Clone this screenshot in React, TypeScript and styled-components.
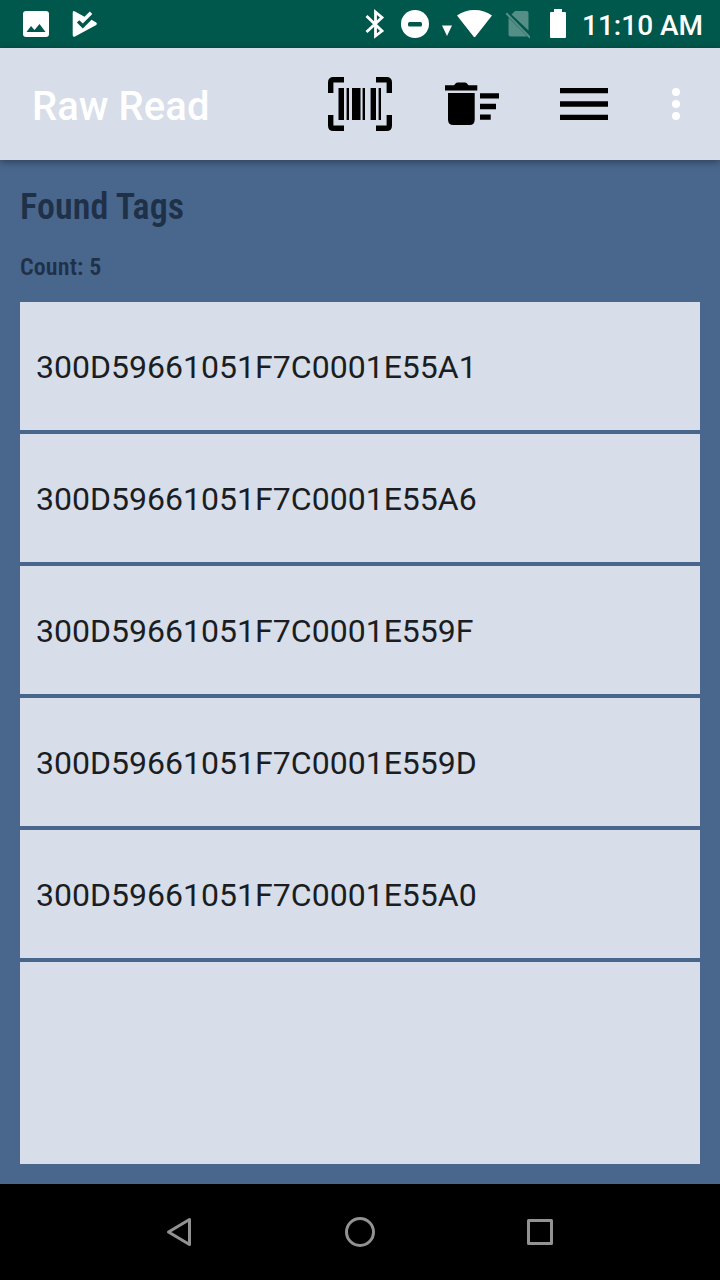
import React from 'react';
import styled, { createGlobalStyle } from 'styled-components';

const GlobalStyle = createGlobalStyle`
  *, *::before, *::after { box-sizing: border-box; }
  body { margin: 0; background: #49678d; font-family: Roboto, "Liberation Sans", sans-serif; }
  svg { display: block; flex: none; }
`;

const Screen = styled.div`
  width: 720px;
  height: 1280px;
  display: flex;
  flex-direction: column;
  background: #49678d;
  overflow: hidden;
`;

const StatusBar = styled.header`
  height: 48px;
  flex: none;
  display: flex;
  justify-content: space-between;
  padding: 0 18px 0 22px;
  background: #00574b;
  color: #fff;
`;

const StatusGroup = styled.div<{ $gap?: number }>`
  display: flex;
  align-items: center;
  gap: ${p => p.$gap ?? 0}px;
`;

const Clock = styled.time`
  width: 120px;
  margin-left: 16px;
  padding-top: 4px;
  font-size: 28px;
  font-weight: 500;
  line-height: 44px;
  white-space: nowrap;
`;

const AppBar = styled.div`
  height: 112px;
  flex: none;
  display: flex;
  align-items: center;
  padding: 0 8px 0 32px;
  background: #d7dde9;
  box-shadow: 0 2px 8px rgba(0, 0, 0, 0.4);
  z-index: 1;
`;

const Title = styled.h1`
  flex: 1;
  margin: 0;
  padding-top: 6px;
  color: #fff;
  font-size: 40px;
  font-weight: 500;
  letter-spacing: 0.06px;
  line-height: 48px;
  white-space: nowrap;
`;

const Action = styled.button<{ $width: number }>`
  width: ${p => p.$width}px;
  height: 112px;
  flex: none;
  display: flex;
  align-items: center;
  justify-content: center;
  padding: 0;
  border: 0;
  background: transparent;
`;

const Content = styled.main`
  flex: 1;
  min-height: 0;
  display: flex;
  flex-direction: column;
  padding: 24px 20px 20px;
`;

const Heading = styled.h2`
  height: 46px;
  flex: none;
  margin: 0;
  color: #1f3148;
  font-family: "Roboto Condensed", Roboto, sans-serif;
  font-stretch: 75%;
  font-size: 36px;
  font-weight: 600;
  letter-spacing: 0.1px;
  line-height: 46px;
`;

const Count = styled.p`
  height: 72px;
  flex: none;
  margin: 0;
  padding-top: 20px;
  color: #1f3148;
  font-family: "Roboto Condensed", Roboto, sans-serif;
  font-stretch: 75%;
  font-size: 24px;
  font-weight: 600;
  letter-spacing: 0.12px;
  line-height: 34px;
`;

const TagList = styled.ul`
  flex: 1;
  margin: 0;
  padding: 0;
  list-style: none;
  background: #d7dde9;
`;

const TagRow = styled.li`
  height: 132px;
  display: flex;
  align-items: center;
  padding: 2px 16px 0;
  border-bottom: 4px solid #49678d;
  color: #1a1d22;
  font-size: 32px;
  letter-spacing: 0.02px;
  line-height: 40px;
`;

const NavBar = styled.nav`
  height: 96px;
  flex: none;
  display: flex;
  justify-content: center;
  background: #000;
`;

const tags = [
  '300D59661051F7C0001E55A1',
  '300D59661051F7C0001E55A6',
  '300D59661051F7C0001E559F',
  '300D59661051F7C0001E559D',
  '300D59661051F7C0001E55A0',
];

const PictureIcon = () => (
  <svg width="28" height="48" fill="#fff">
    <path fillRule="evenodd" d="M4 11h20a3 3 0 0 1 3 3v20a3 3 0 0 1-3 3H4a3 3 0 0 1-3-3V14a3 3 0 0 1 3-3zM4.500 32h19l-6-8-5 6-3.500-4z" />
  </svg>
);

const PlayCheckIcon = () => (
  <svg width="28" height="48" fill="#fff">
    <path d="M2.700 13Q2.700 10.200 5 11.500L14.500 16.800 19.800 11.600 22.300 14 12.800 23.600 9.300 20.200 6.900 22.600 12.800 28.400 21.500 19.700 25.800 22.200Q28 23.700 25.800 25.200L5 36.500Q2.700 37.600 2.700 35z" />
  </svg>
);

const BluetoothIcon = () => (
  <svg width="20" height="48" fill="none" stroke="#fff" strokeWidth="2.800">
    <path d="M1.500 16 17 31 10.500 36V12L17 17.500 1.500 32" />
  </svg>
);

const DisturbIcon = () => (
  <svg width="28" height="48">
    <circle cx="14" cy="24" r="14" fill="#fff" />
    <rect x="7" y="22" width="14" height="4.500" rx="1.500" fill="#00574b" />
  </svg>
);

const WifiIcon = () => (
  <svg width="50" height="48" fill="#fff">
    <path d="M0 25.500h10L5 36zM15 15.500C24 8 41 8 50 15.500L33.500 36.500Q32.500 38 31.500 36.500z" />
  </svg>
);

const NoSimIcon = () => (
  <svg width="28" height="48">
    <g fill="#fff" opacity=".33">
      <path d="M13 11H24.500Q26.500 11 26.500 13V30.500L9.500 14.500zM6.500 17.500 25.500 36.500H8.500Q6.500 36.500 6.500 34.500z" />
      <path d="M3.500 14 5 12.500 29 37 27.500 38.500z" />
    </g>
  </svg>
);

const BatteryIcon = () => (
  <svg width="16" height="48" fill="#fff">
    <path d="M4 9h8v3h3a1 1 0 0 1 1 1v24a1 1 0 0 1-1 1H1a1 1 0 0 1-1-1V13a1 1 0 0 1 1-1h3z" />
  </svg>
);

const BarcodeIcon = () => (
  <svg width="64" height="54">
    <path d="M0 16V5.500Q0 0 5.500 0H16V5.400H5.400V16zM48 0H58.500Q64 0 64 5.500V16H58.600V5.400H48zM64 38V48.500Q64 54 58.500 54H48V48.600H58.600V38zM16 54H5.500Q0 54 0 48.500V38H5.400V48.600H16z" />
    <path d="M10.500 11H16V43H10.500zM18.600 11H21V43H18.600zM24 11H32.500V43H24zM34.600 11H37V43H34.600zM42.600 11H48V43H42.600zM50.600 11H53V43H50.600z" />
  </svg>
);

const ClearListIcon = () => (
  <svg width="54" height="44">
    <path d="M0 3.300H9L11 1Q11.500.500 12.500.500H20Q21 .500 21.500 1L23.500 3.300H32.300V8.500H0zM3 11H29.700V37.500Q29.700 43 24.500 43H8.500Q3 43 3 37.500zM35 11.200H54V16.500H35zM35 21.800H51V27.200H35zM35 32.500H45.700V37.800H35z" />
  </svg>
);

const MenuIcon = () => (
  <svg width="48" height="32">
    <path d="M0 0H48V5.330H0zM0 13.330H48V18.670H0zM0 26.670H48V32H0z" />
  </svg>
);

const MoreIcon = () => (
  <svg width="8" height="32" fill="#fff">
    <circle cx="4" cy="4" r="4" />
    <circle cx="4" cy="16" r="4" />
    <circle cx="4" cy="28" r="4" />
  </svg>
);

const NavIcon = ({ d }: { d: string }) => (
  <svg width="32" height="32" fill="none" stroke="#929292" strokeWidth="3" strokeLinejoin="round">
    <path d={d} />
  </svg>
);

const Spacer = styled.span<{ $width: number }>`
  width: ${p => p.$width}px;
  flex: none;
`;

const NavButton = styled(Action)`
  height: 96px;
`;

export default function App() {
  return (
    <Screen>
      <GlobalStyle />
      <StatusBar>
        <StatusGroup $gap={20}>
          <PictureIcon />
          <PlayCheckIcon />
        </StatusGroup>
        <StatusGroup>
          <BluetoothIcon />
          <Spacer $width={16} />
          <DisturbIcon />
          <Spacer $width={13} />
          <WifiIcon />
          <Spacer $width={10} />
          <NoSimIcon />
          <Spacer $width={20} />
          <BatteryIcon />
          <Clock>11:10 AM</Clock>
        </StatusGroup>
      </StatusBar>
      <AppBar>
        <Title>Raw Read</Title>
        <Action $width={112} aria-label="Scan barcode"><BarcodeIcon /></Action>
        <Action $width={112} aria-label="Clear list"><ClearListIcon /></Action>
        <Action $width={112} aria-label="Menu"><MenuIcon /></Action>
        <Action $width={72} aria-label="More options"><MoreIcon /></Action>
      </AppBar>
      <Content>
        <Heading>Found Tags</Heading>
        <Count>Count: 5</Count>
        <TagList>
          {tags.map(tag => <TagRow key={tag}>{tag}</TagRow>)}
        </TagList>
      </Content>
      <NavBar>
        <NavButton $width={180} aria-label="Back"><NavIcon d="M4.500 16 25.500 3.500V28.500z" /></NavButton>
        <NavButton $width={180} aria-label="Home"><NavIcon d="M16 2.500a13.500 13.500 0 1 1 0 27a13.500 13.500 0 1 1 0-27z" /></NavButton>
        <NavButton $width={180} aria-label="Recent apps"><NavIcon d="M4.500 4.500H27.500V27.500H4.500z" /></NavButton>
      </NavBar>
    </Screen>
  );
}
